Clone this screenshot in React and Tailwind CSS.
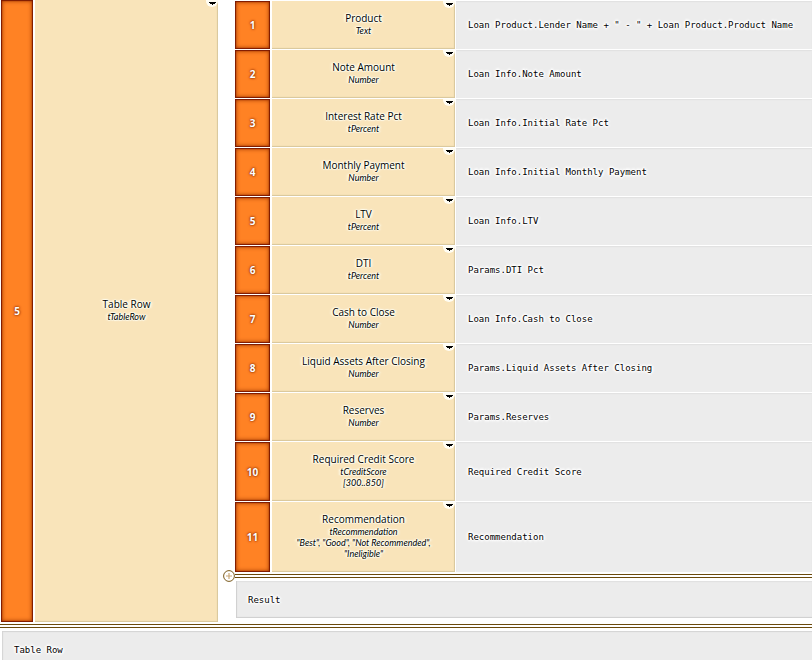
import React from "react";

const rows = [
  { name: "Product", types: ["Text"], value: 'Loan Product.Lender Name + " - " + Loan Product.Product Name' },
  { name: "Note Amount", types: ["Number"], value: "Loan Info.Note Amount" },
  { name: "Interest Rate Pct", types: ["tPercent"], value: "Loan Info.Initial Rate Pct" },
  { name: "Monthly Payment", types: ["Number"], value: "Loan Info.Initial Monthly Payment" },
  { name: "LTV", types: ["tPercent"], value: "Loan Info.LTV" },
  { name: "DTI", types: ["tPercent"], value: "Params.DTI Pct" },
  { name: "Cash to Close", types: ["Number"], value: "Loan Info.Cash to Close" },
  { name: "Liquid Assets After Closing", types: ["Number"], value: "Params.Liquid Assets After Closing" },
  { name: "Reserves", types: ["Number"], value: "Params.Reserves" },
  { name: "Required Credit Score", types: ["tCreditScore", "[300..850]"], value: "Required Credit Score" },
  {
    name: "Recommendation",
    types: ["tRecommendation", '"Best", "Good", "Not Recommended",', '"Ineligible"'],
    value: "Recommendation",
  },
];

const orange =
  "bg-[#ff8224] shadow-[inset_0_0_1px_1px_#7a1800,inset_0_0_4px_1px_#a03800] text-center text-[10px] leading-[14px] font-bold text-white [text-shadow:0_0_2px_#7a2000,0_0_3px_#a03800]";
const tan = "bg-[#f9e4ba] shadow-[inset_-1px_-1px_1px_#d8c69c]";
const glow =
  "[text-shadow:1px_0_1px_#fffff0,-1px_0_1px_#fffff0,0_1px_1px_#fffff0,0_-1px_1px_#fffff0,2px_0_2px_#fffff0,-2px_0_2px_#fffff0]";
const code =
  "font-['DejaVu_Sans_Mono',monospace] text-[9px] leading-[12px] text-black whitespace-nowrap [text-shadow:1px_0_1px_#fff,-1px_0_1px_#fff,0_1px_1px_#fff,0_-1px_1px_#fff,2px_0_2px_#fff,-2px_0_2px_#fff,0_2px_2px_#fff,0_-2px_2px_#fff]";

function MenuButton({ label }) {
  return (
    <button
      type="button"
      aria-label={label}
      className="absolute top-0 right-0 flex h-[7px] w-[12px] items-center justify-center rounded-b-full bg-[#fffdf4]"
    >
      <svg width="7" height="3" viewBox="0 0 7 3" shapeRendering="crispEdges" aria-hidden="true">
        <path d="M0 0h7v1H6v1H4v1H3V2H1V1H0z" fill="#000" />
      </svg>
    </button>
  );
}

function Variable({ name, types }) {
  return (
    <div className={`pb-[2px] text-center text-black ${glow}`}>
      <div className="text-[10px] leading-[13px] font-medium">{name}</div>
      {types.map((t) => (
        <div key={t} className="font-['Lato',sans-serif] text-[9px] leading-[11px] italic">{t}</div>
      ))}
    </div>
  );
}

function DoubleRule() {
  return <div className="h-[4px] border-y border-[#6b4a0c] bg-white" />;
}

export default function App() {
  return (
    <main className="overflow-hidden bg-white font-['Open_Sans',sans-serif]">
      <section className="flex pl-px">
        <div className={`flex w-[32px] shrink-0 items-center justify-center ${orange}`}>5</div>
        <div className={`relative ml-[2px] flex w-[183px] shrink-0 items-center justify-center ${tan}`}>
          <MenuButton label="Table Row menu" />
          <Variable name="Table Row" types={["tTableRow"]} />
        </div>
        <div className="min-w-0 flex-1 pt-px pb-[4px] pl-[17px]">
          <table className="w-full table-fixed border-separate border-spacing-0">
            <colgroup>
              <col className="w-[37px]" />
              <col className="w-[184px]" />
              <col />
            </colgroup>
            <tbody>
              {rows.map((r, i) => (
                <tr key={r.name} className={r.types.length === 3 ? "h-[71px]" : r.types.length === 2 ? "h-[60px]" : "h-[49px]"}>
                  <th scope="row" className={`border-r-2 border-b border-white p-0 ${orange}`}>{i + 1}</th>
                  <td className={`relative border-r border-b border-white p-0 ${tan}`}>
                    <MenuButton label={`${r.name} menu`} />
                    <Variable name={r.name} types={r.types} />
                  </td>
                  <td className="border-b border-white bg-[#ececec] py-0 pr-0 pl-[12px] shadow-[inset_0_1px_1px_#e2e2e2]">
                    <div className={code}>{r.value}</div>
                  </td>
                </tr>
              ))}
            </tbody>
          </table>
          <div className="relative pt-px">
            <DoubleRule />
            <button type="button" aria-label="Add row" className="absolute -top-[3px] -left-[12px] h-[12px] w-[12px]">
              <svg width="12" height="12" viewBox="0 0 12 12" aria-hidden="true">
                <circle cx="6" cy="6" r="5.4" fill="#fff" stroke="#7a5a1c" strokeWidth="1" />
                <path d="M6 3v6M3 6h6" stroke="#c9a878" strokeWidth="1.2" />
              </svg>
            </button>
          </div>
          <div className="mt-[3px] ml-px flex h-[37px] items-center bg-[#ececec] pl-[12px] shadow-[inset_1px_-1px_1px_#cfcfcf,inset_0_1px_1px_#e0e0e0]">
            <div className={code}>Result</div>
          </div>
        </div>
      </section>
      <div className="pt-[2px]">
        <DoubleRule />
      </div>
      <section className="mt-[3px] ml-[2px] flex h-[38px] items-center bg-[#ececec] pl-[12px] shadow-[inset_1px_1px_1px_#d4d4d4]">
        <div className={code}>Table Row</div>
      </section>
    </main>
  );
}
